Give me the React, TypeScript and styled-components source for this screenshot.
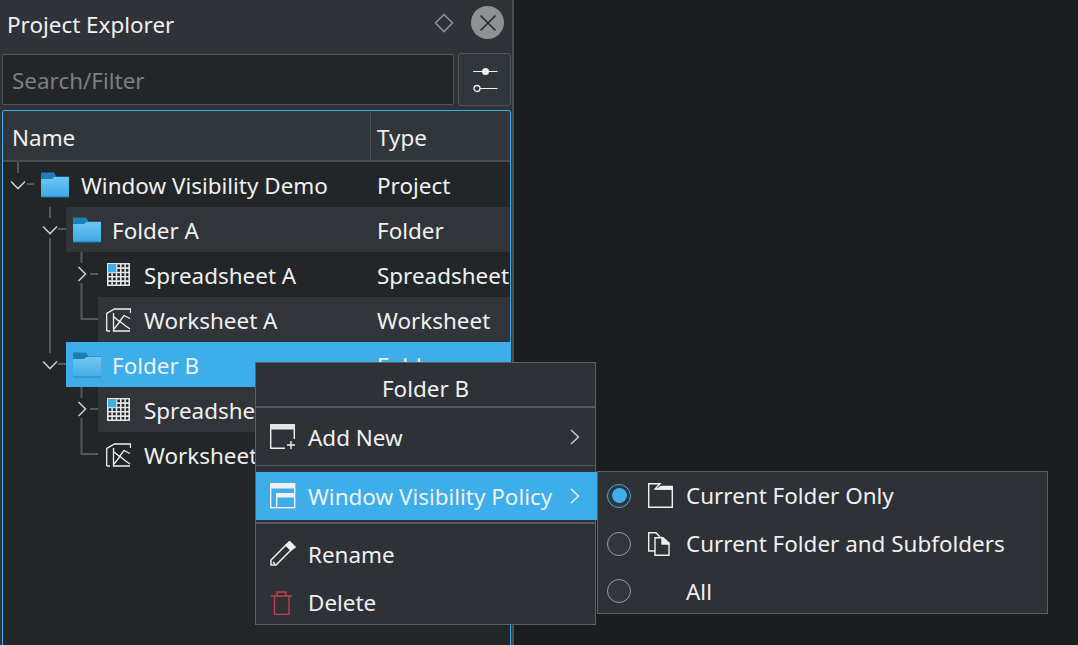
import React from "react";
import styled, { createGlobalStyle } from "styled-components";

const Global = createGlobalStyle`
  html, body { margin: 0; padding: 0; background: #1b1e20; }
  body { font-family: "Noto Sans", sans-serif; color: #eff0f1; }
`;

const Screen = styled.div`
  position: relative;
  width: 1078px;
  height: 645px;
  overflow: hidden;
  display: flex;
  background: #1b1e20;
  font-size: 22.45px;
  line-height: 30px;
`;

const Dock = styled.div`
  width: 512px;
  height: 645px;
  flex: none;
  display: flex;
  flex-direction: column;
  background: #2f3237;
  border-right: 2px solid #4a4d51;
`;

const TitleBar = styled.div`
  height: 53px;
  flex: none;
  display: flex;
  align-items: center;
  padding: 0 8px 8px 7px;
  box-sizing: border-box;
`;

const DockTitle = styled.div`
  flex: 1;
  padding-top: 4px;
`;

const CloseButton = styled.div`
  width: 33px;
  height: 33px;
  margin-left: 17px;
  border-radius: 50%;
  background: #8e9193;
  display: flex;
  align-items: center;
  justify-content: center;
`;

const SearchRow = styled.div`
  height: 53px;
  flex: none;
  display: flex;
  gap: 4px;
  padding: 0 1px 0 2px;
`;

const SearchField = styled.div`
  flex: 1;
  margin: 1px 0;
  box-sizing: border-box;
  border: 1px solid #54575a;
  border-radius: 2px;
  background: #232629;
  color: #7c7e80;
  display: flex;
  align-items: center;
  padding: 2px 0 0 9px;
`;

const ToolButton = styled.div`
  width: 53px;
  box-sizing: border-box;
  border: 1px solid #54575a;
  border-radius: 3px;
  background: #31363b;
  display: flex;
  align-items: center;
  justify-content: center;
`;

const TreePanel = styled.div`
  flex: 1;
  margin: 4px 1px 0 2px;
  border: 1px solid #3daee9;
  border-bottom: 0;
  border-radius: 3px 3px 0 0;
  background: #232629;
  overflow: hidden;
`;

const Header = styled.div`
  height: 51px;
  box-sizing: border-box;
  display: flex;
  background: #31363b;
  border-bottom: 2px solid #4a4d51;
`;

const HeaderCell = styled.div<{ $w?: number }>`
  ${(p) => (p.$w ? `width: ${p.$w}px; border-right: 1px solid #4a4d51; box-sizing: border-box;` : "flex: 1;")}
  display: flex;
  align-items: center;
  padding: 4px 0 0 ${(p) => (p.$w ? 9 : 6)}px;
`;

const Row = styled.div`
  height: 45px;
  display: flex;
`;

const Gutter = styled.svg`
  flex: none;
  display: block;
`;

const RowBody = styled.div<{ $state?: "alt" | "selected" }>`
  flex: 1;
  min-width: 0;
  display: flex;
  align-items: center;
  background: ${(p) =>
    p.$state === "selected" ? "#3daee9" : p.$state === "alt" ? "#31353a" : "transparent"};
`;

const IconSlot = styled.div<{ $w: number; $pad: number }>`
  flex: none;
  width: ${(p) => p.$w}px;
  padding-left: ${(p) => p.$pad}px;
  box-sizing: border-box;
  display: flex;
  align-items: center;
`;

const NameCell = styled.div`
  flex: 1;
  min-width: 0;
  padding-top: 2px;
  white-space: nowrap;
  overflow: hidden;
`;

const TypeCell = styled.div`
  flex: none;
  width: 140px;
  padding: 2px 0 0 7px;
  box-sizing: border-box;
  white-space: nowrap;
  overflow: hidden;
`;

const Popup = styled.div<{ $x: number; $y: number; $w: number }>`
  position: absolute;
  left: ${(p) => p.$x}px;
  top: ${(p) => p.$y}px;
  width: ${(p) => p.$w}px;
  box-sizing: border-box;
  border: 1px solid #5d6064;
  background: #2e3136;
  display: flex;
  flex-direction: column;
`;

const MenuTitle = styled.div`
  height: 43px;
  padding-top: 8px;
  box-sizing: border-box;
  display: flex;
  align-items: center;
  justify-content: center;
`;

const MenuSeparator = styled.div<{ $h: number; $before: number; $after: number }>`
  height: ${(p) => p.$h}px;
  margin: ${(p) => p.$before}px 0 ${(p) => p.$after}px;
  background: #55585c;
`;

const MenuItem = styled.div<{ $active?: boolean }>`
  height: 48px;
  box-sizing: border-box;
  display: flex;
  align-items: center;
  padding-left: 14px;
  background: ${(p) => (p.$active ? "#3daee9" : "transparent")};
  margin-right: ${(p) => (p.$active ? -2 : 0)}px;
  &:last-child {
    height: 46px;
    padding-top: 3px;
  }
`;

const MenuIcon = styled.div`
  width: 38px;
  flex: none;
  display: flex;
  align-items: center;
`;

const MenuLabel = styled.div`
  flex: 1;
  padding-top: 1px;
`;

const MenuArrow = styled.div<{ $active?: boolean }>`
  width: ${(p) => (p.$active ? 28 : 26)}px;
  flex: none;
  display: flex;
`;

const PolicyItem = styled.div`
  height: 48px;
  display: flex;
  align-items: center;
  padding: 0 0 1px 9px;
  box-sizing: border-box;
  &:last-child {
    height: 45px;
    padding: 1px 0 0 9px;
  }
`;

const PolicyLabel = styled.div`
  flex: 1;
  padding-top: 1px;
`;

const Radio = styled.div<{ $on?: boolean }>`
  width: 24px;
  height: 24px;
  flex: none;
  box-sizing: border-box;
  border-radius: 50%;
  border: 1.5px solid ${(p) => (p.$on ? "#3daee9" : "#999c9e")};
  background: #31363b;
  display: flex;
  align-items: center;
  justify-content: center;
  &::after {
    content: "";
    display: ${(p) => (p.$on ? "block" : "none")};
    width: 15px;
    height: 15px;
    border-radius: 50%;
    background: #3daee9;
  }
`;

const PolicyIcon = styled.div`
  width: 55px;
  flex: none;
  padding-left: 17px;
  box-sizing: border-box;
  display: flex;
  align-items: center;
`;

const FolderIcon = ({ selected }: { selected?: boolean }) => (
  <svg width="28" height="26" viewBox="0 0 28 26">
    <defs>
      <linearGradient id={selected ? "fs" : "fn"} x1="0" y1="0" x2="0" y2="1">
        <stop offset="0" stopColor={selected ? "#74c6f0" : "#6cc4f2"} />
        <stop offset="1" stopColor={selected ? "#45ade5" : "#3ea9e6"} />
      </linearGradient>
    </defs>
    <path d="M0 1 L0.5 0.5 H13 L15.5 4.5 H28 V8 H0 Z" fill={selected ? "#1a7db5" : "#1d7fb8"} />
    <path d="M0 7 H11 L13.5 5 H28 V25 H0 Z" fill={`url(#${selected ? "fs" : "fn"})`} />
    <rect x="0" y="24.5" width="28" height="1" fill={selected ? "#2a87ba" : "#1b7db6"} />
  </svg>
);

const SheetIcon = () => (
  <svg width="23" height="23" viewBox="0 0 23 23">
    <rect x="0.5" y="0.5" width="22" height="22" fill="#26292c" />
    <path
      d="M0.8 0V23M5.1 0V23M9.5 0V23M13.8 0V23M18.1 0V23M22.2 0V23M0 0.8H23M0 5.1H23M0 9.5H23M0 13.8H23M0 18.1H23M0 22.2H23"
      stroke="#e4e5e6"
      strokeWidth="1.6"
      fill="none"
    />
    <rect x="1" y="1" width="8.2" height="8.2" fill="#3daee9" />
  </svg>
);

const WorksheetIcon = () => (
  <svg width="25" height="24" viewBox="0 0 25 24" fill="none" stroke="#eff0f1" strokeWidth="1.3">
    <path d="M0.7 23 V5.5 L8.5 1 H24.5 V5 M0.7 23 H4" />
    <path d="M7.5 5 V23 H24 M8 9 L13.5 13.5 L18 7.5 L24 10.5 M8 21 L14 13.5 L19 17.5 L24 21" />
  </svg>
);

const Chevron = ({ x, y, open }: { x: number; y: number; open: boolean }) => (
  <path
    d={open ? `M${x - 7} ${y - 3.5} L${x} ${y + 3.5} L${x + 7} ${y - 3.5}` : `M${x - 3.5} ${y - 7} L${x + 3.5} ${y} L${x - 3.5} ${y + 7}`}
    fill="none"
    stroke="#c9cbcc"
    strokeWidth="1.6"
  />
);

const lineProps = { stroke: "#55585b", strokeWidth: 2, fill: "none" };

const RootGutter = () => (
  <Gutter width="31" height="45">
    <path d="M15 0V11M24 22H31" {...lineProps} />
    <Chevron x={15} y={23} open />
  </Gutter>
);

const FolderGutter = ({ passes }: { passes: boolean }) => (
  <Gutter width="63" height="45">
    <path d={`M47 0V11M55 22H63${passes ? "M47 31V45" : ""}`} {...lineProps} />
    <Chevron x={47} y={23} open />
  </Gutter>
);

const SheetGutter = ({ passes }: { passes: boolean }) => (
  <Gutter width="95" height="45">
    <path d={`M78.5 0V11M87 22H95${passes ? "M47 0V45" : ""}M78.5 31V45`} {...lineProps} />
    <Chevron x={79} y={22} open={false} />
  </Gutter>
);

const LeafGutter = ({ passes }: { passes: boolean }) => (
  <Gutter width="95" height="45">
    <path d={`M78.5 0V22H95${passes ? "M47 0V45" : ""}`} {...lineProps} />
  </Gutter>
);

export default function App() {
  return (
    <Screen>
      <Global />
      <Dock>
        <TitleBar>
          <DockTitle>Project Explorer</DockTitle>
          <svg width="20" height="20" viewBox="0 0 20 20">
            <path d="M10 1.5 L18.5 10 L10 18.5 L1.5 10 Z" fill="none" stroke="#8c8f91" strokeWidth="1.6" />
          </svg>
          <CloseButton>
            <svg width="20" height="20" viewBox="0 0 20 20">
              <path d="M2.5 2.5 L17.5 17.5 M17.5 2.5 L2.5 17.5" stroke="#26292c" strokeWidth="1.6" />
            </svg>
          </CloseButton>
        </TitleBar>
        <SearchRow>
          <SearchField>Search/Filter</SearchField>
          <ToolButton>
            <svg width="26" height="26" viewBox="0 0 26 26">
              <path d="M1 4.5H25.5M8 21.5H25.5" stroke="#eff0f1" strokeWidth="1.2" fill="none" />
              <circle cx="13.5" cy="4.5" r="3.5" fill="#eff0f1" />
              <circle cx="5" cy="21.5" r="3" fill="#31363b" stroke="#eff0f1" strokeWidth="1.3" />
            </svg>
          </ToolButton>
        </SearchRow>
        <TreePanel>
          <Header>
            <HeaderCell $w={368}>Name</HeaderCell>
            <HeaderCell>Type</HeaderCell>
          </Header>
          <Row>
            <RootGutter />
            <RowBody>
              <IconSlot $w={47} $pad={7}><FolderIcon /></IconSlot>
              <NameCell>Window Visibility Demo</NameCell>
              <TypeCell>Project</TypeCell>
            </RowBody>
          </Row>
          <Row>
            <FolderGutter passes />
            <RowBody $state="alt">
              <IconSlot $w={46} $pad={7}><FolderIcon /></IconSlot>
              <NameCell>Folder A</NameCell>
              <TypeCell>Folder</TypeCell>
            </RowBody>
          </Row>
          <Row>
            <SheetGutter passes />
            <RowBody>
              <IconSlot $w={46} $pad={9}><SheetIcon /></IconSlot>
              <NameCell>Spreadsheet A</NameCell>
              <TypeCell>Spreadsheet</TypeCell>
            </RowBody>
          </Row>
          <Row>
            <LeafGutter passes />
            <RowBody $state="alt">
              <IconSlot $w={46} $pad={8}><WorksheetIcon /></IconSlot>
              <NameCell>Worksheet A</NameCell>
              <TypeCell>Worksheet</TypeCell>
            </RowBody>
          </Row>
          <Row>
            <FolderGutter passes={false} />
            <RowBody $state="selected">
              <IconSlot $w={46} $pad={7}><FolderIcon selected /></IconSlot>
              <NameCell>Folder B</NameCell>
              <TypeCell>Folder</TypeCell>
            </RowBody>
          </Row>
          <Row>
            <SheetGutter passes={false} />
            <RowBody $state="alt">
              <IconSlot $w={46} $pad={9}><SheetIcon /></IconSlot>
              <NameCell>Spreadsheet B</NameCell>
              <TypeCell>Spreadsheet</TypeCell>
            </RowBody>
          </Row>
          <Row>
            <LeafGutter passes={false} />
            <RowBody>
              <IconSlot $w={46} $pad={8}><WorksheetIcon /></IconSlot>
              <NameCell>Worksheet B</NameCell>
              <TypeCell>Worksheet</TypeCell>
            </RowBody>
          </Row>
        </TreePanel>
      </Dock>

      <Popup $x={255} $y={362} $w={341}>
        <MenuTitle>Folder B</MenuTitle>
        <MenuSeparator $h={2} $before={0} $after={5} />
        <MenuItem>
          <MenuIcon>
            <svg width="26" height="26" viewBox="0 0 26 26" fill="none" stroke="#eff0f1" strokeWidth="1.4">
              <path d="M0.7 4 V24.3 H15 M24.3 4 V15" />
              <rect x="0" y="0" width="25" height="5.5" fill="#e4e5e6" stroke="none" />
              <path d="M17 21H25M21 17V25" />
            </svg>
          </MenuIcon>
          <MenuLabel>Add New</MenuLabel>
          <MenuArrow>
            <svg width="12" height="16" viewBox="0 0 12 16"><path d="M2 1 L9.5 8 L2 15" fill="none" stroke="#c9cbcc" strokeWidth="1.5" /></svg>
          </MenuArrow>
        </MenuItem>
        <MenuSeparator $h={1} $before={4} $after={6} />
        <MenuItem $active>
          <MenuIcon>
            <svg width="26" height="26" viewBox="0 0 26 26" fill="none" stroke="#eff0f1" strokeWidth="1.4">
              <rect x="0.7" y="0.7" width="24" height="24" />
              <rect x="0" y="0" width="25" height="5.5" fill="#eff0f1" stroke="none" />
              <rect x="6" y="10" width="19" height="4.5" fill="#eff0f1" stroke="none" />
              <path d="M6.7 10V25" />
            </svg>
          </MenuIcon>
          <MenuLabel>Window Visibility Policy</MenuLabel>
          <MenuArrow $active>
            <svg width="12" height="16" viewBox="0 0 12 16"><path d="M2 1 L9.5 8 L2 15" fill="none" stroke="#eff0f1" strokeWidth="1.5" /></svg>
          </MenuArrow>
        </MenuItem>
        <MenuSeparator $h={2} $before={2} $after={6} />
        <MenuItem>
          <MenuIcon>
            <svg width="26" height="26" viewBox="0 0 26 26" fill="none" stroke="#eff0f1" strokeWidth="1.5">
              <path d="M1 19 L16 4 L21 9 L6 24 H1 Z M3 21 L5 23" />
              <path d="M16 4 L19.5 0.5 L25 6 L21 9 Z" fill="#eff0f1" />
            </svg>
          </MenuIcon>
          <MenuLabel>Rename</MenuLabel>
        </MenuItem>
        <MenuItem>
          <MenuIcon>
            <svg width="26" height="26" viewBox="0 0 26 26" fill="none" stroke="#c9404e" strokeWidth="1.3">
              <path d="M1 6H22M7 6V2H16V6M4.5 6V24.3H19V6" />
            </svg>
          </MenuIcon>
          <MenuLabel>Delete</MenuLabel>
        </MenuItem>
      </Popup>

      <Popup $x={597} $y={471} $w={451}>
        <PolicyItem>
          <Radio $on />
          <PolicyIcon>
            <svg width="25" height="25" viewBox="0 0 25 25" fill="none" stroke="#eff0f1" strokeWidth="1.4">
              <path d="M0.7 0.7 H12 L7 6 H24.3 V24.3 H0.7 Z" />
              <path d="M12.5 2.8 H25 V6.5 H8 Z" fill="#eff0f1" stroke="none" />
            </svg>
          </PolicyIcon>
          <PolicyLabel>Current Folder Only</PolicyLabel>
        </PolicyItem>
        <PolicyItem>
          <Radio />
          <PolicyIcon>
            <svg width="22" height="24" viewBox="0 0 22 24" fill="none" stroke="#eff0f1" strokeWidth="1.4">
              <path d="M7 19 H0.7 V0.7 H8 L12 5" />
              <path d="M7 5.7 H15 L21 11 V23.3 H7 Z" />
              <path d="M14 5.7 V12 H21 Z" fill="#eff0f1" />
            </svg>
          </PolicyIcon>
          <PolicyLabel>Current Folder and Subfolders</PolicyLabel>
        </PolicyItem>
        <PolicyItem>
          <Radio />
          <PolicyIcon />
          <PolicyLabel>All</PolicyLabel>
        </PolicyItem>
      </Popup>
    </Screen>
  );
}
